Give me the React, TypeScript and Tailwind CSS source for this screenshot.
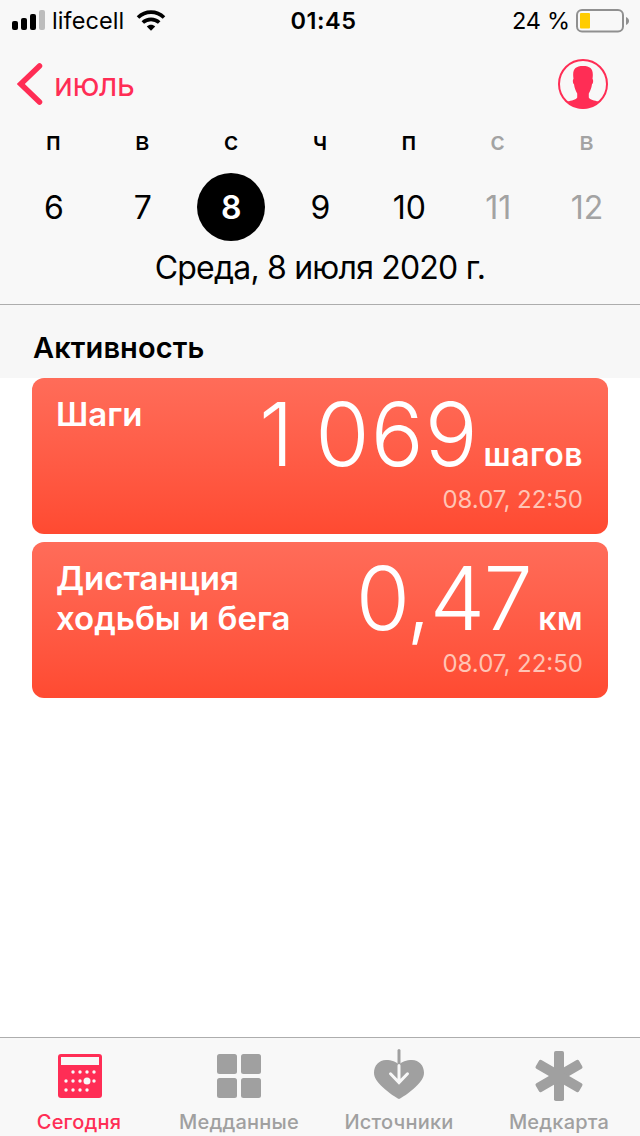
const days = [
  { letter: 'п', date: 6 },
  { letter: 'в', date: 7 },
  { letter: 'с', date: 8, selected: true },
  { letter: 'ч', date: 9 },
  { letter: 'п', date: 10 },
  { letter: 'с', date: 11, disabled: true },
  { letter: 'в', date: 12, disabled: true },
];

const cards = [
  { title: 'Шаги', value: '1 069', unit: 'шагов', time: '08.07, 22:50', valueClass: 'tracking-[1px] [word-spacing:-5px] mr-[5px]' },
  { title: 'Дистанция ходьбы и бега', value: '0,47', unit: 'км', time: '08.07, 22:50', valueClass: 'tracking-[-1.5px] mr-[7px]' },
];

const TodayIcon = () => (
  <svg width="54" height="54" viewBox="-1 0 54 54" fill="currentColor">
    <rect x="5" y="6" width="44" height="44" rx="3" />
    <rect x="8" y="9" width="38" height="8" fill="#f8f8f8" />
    <g fill="#f8f8f8">
      <circle cx="20" cy="24" r="1.7" />
      <circle cx="27" cy="24" r="1.7" />
      <circle cx="34" cy="24" r="1.7" />
      <circle cx="41" cy="24" r="1.7" />
      <circle cx="13" cy="33" r="1.7" />
      <circle cx="20" cy="33" r="1.7" />
      <circle cx="27" cy="33" r="1.7" />
      <circle cx="34" cy="33" r="3.5" />
      <circle cx="41" cy="33" r="1.7" />
      <circle cx="13" cy="42" r="1.7" />
      <circle cx="20" cy="42" r="1.7" />
      <circle cx="27" cy="42" r="1.7" />
      <circle cx="34" cy="42" r="1.7" />
    </g>
  </svg>
);

const DataIcon = () => (
  <svg width="54" height="54" viewBox="0 0 54 54" fill="currentColor">
    <rect x="5" y="6" width="20" height="20" rx="2.5" />
    <rect x="29" y="6" width="20" height="20" rx="2.5" />
    <rect x="5" y="30" width="20" height="20" rx="2.5" />
    <rect x="29" y="30" width="20" height="20" rx="2.5" />
  </svg>
);

const SourcesIcon = () => (
  <svg width="54" height="54" viewBox="0 0 54 54" fill="currentColor">
    <path d="M27 51C24.500 50 17 45 10.500 39C5.500 34.500 2 30 2 24.800C2 17.500 7 12 14 12C19.500 12 24.500 13.500 27 17C29.500 13.500 34.500 12 40 12C47 12 52 17.500 52 24.800C52 30 48.500 34.500 43.500 39C37 45 29.500 50 27 51Z" />
    <path d="M27 2.500V17" stroke="currentColor" strokeWidth="3" strokeLinecap="round" />
    <path d="M27 17.500V34M18.500 25.800L27 34.500L35.500 25.800" fill="none" stroke="#f8f8f8" strokeWidth="3" strokeLinecap="round" />
  </svg>
);

const MedicalIcon = () => (
  <svg width="54" height="54" viewBox="0 0 54 54" fill="currentColor">
    <rect x="22" y="3" width="10" height="50" rx="1.800" />
    <rect x="22" y="3" width="10" height="50" rx="1.800" transform="rotate(60 27 28)" />
    <rect x="22" y="3" width="10" height="50" rx="1.800" transform="rotate(-60 27 28)" />
  </svg>
);

const tabs = [
  { label: 'Сегодня', icon: TodayIcon, active: true },
  { label: 'Медданные', icon: DataIcon },
  { label: 'Источники', icon: SourcesIcon },
  { label: 'Медкарта', icon: MedicalIcon },
];

const StatusBar = () => (
  <div className="grid h-10 grid-cols-[1fr_auto_1fr] items-center pt-px pr-[10px] pl-3 text-[23.5px]">
    <div className="flex items-center">
      <svg className="-mt-px" width="33" height="20" viewBox="0 0 33 20">
        <rect x="0" y="11" width="6" height="9" rx="2" />
        <rect x="9" y="8" width="6" height="12" rx="2" />
        <rect x="18" y="4" width="6" height="16" rx="2" />
        <rect x="27" y="0" width="6" height="20" rx="2" fill="#bdbdbd" />
      </svg>
      <span className="mt-px ml-[7px] tracking-[0.1px]">lifecell</span>
      <svg className="ml-3" width="30" height="21" viewBox="0 0 30 21" fill="none" stroke="#000" strokeWidth="3.700">
        <path d="M2 7.500C9.500 0.400 20.500 0.400 28 7.500" />
        <path d="M6.800 12.500C11.500 8.200 18.500 8.200 23.200 12.500" />
        <path d="M10.800 16.500C13.200 14.200 16.800 14.200 19.200 16.500L15 20.700Z" fill="#000" stroke="none" />
      </svg>
    </div>
    <div className="mt-px pl-[5px] font-semibold tracking-[0.5px]">01:45</div>
    <div className="flex items-center justify-end">
      <span className="mt-px tracking-[-0.2px]">24 %</span>
      <svg className="ml-[6px]" width="54" height="24" viewBox="0 0 54 24">
        <rect x="1" y="1" width="46" height="21.500" rx="5" fill="none" stroke="#909090" strokeWidth="2" />
        <rect x="4" y="4" width="10" height="15.500" rx="1" fill="#fc0" />
        <path d="M50 8C54 9.500 54 14.500 50 16Z" fill="#909090" />
      </svg>
    </div>
  </div>
);

const NavBar = () => (
  <div className="flex h-[88px] items-center justify-between pr-8 pl-[17px] text-[#ff2d55]">
    <div className="flex items-center">
      <svg width="26" height="42" viewBox="0 0 26 42" fill="none" stroke="currentColor" strokeWidth="5.500" strokeLinecap="round">
        <path d="M22.500 3L3.800 21L22.500 39" />
      </svg>
      <span className="mt-px ml-[11px] text-[32px] tracking-[-0.4px]">июль</span>
    </div>
    <svg width="50" height="50" viewBox="0 0 50 50">
      <circle cx="25" cy="25" r="24" fill="none" stroke="currentColor" strokeWidth="2" />
      <path
        d="M15.400 19C14.300 10.500 17 7 25 7C33 7 35.700 10.500 34.600 19L34.500 20C35.500 20.500 35.300 24.300 34 25.300C33.500 29 32.300 32 30.800 34.500V38.500C31.800 41 36.500 41.500 40.500 42.500C31 52 19 52 9.500 42.500C13.500 41.500 18.200 41 19.200 38.500V34.500C17.700 32 16.500 29 16 25.300C14.700 24.300 14.500 20.500 15.500 20Z"
        fill="currentColor"
      />
    </svg>
  </div>
);

const WeekStrip = () => (
  <div className="grid grid-cols-7 px-[9px]">
    {days.map((day) => (
      <div key={day.date} className={day.disabled ? 'flex flex-col items-center text-[#a3a3a3]' : 'flex flex-col items-center'}>
        <span className="-mt-[2px] h-[30px] text-[25.5px] leading-[30px] font-medium">{day.letter}</span>
        <span
          className={
            day.selected
              ? 'mt-[17px] flex size-[68px] items-center justify-center rounded-full bg-black pt-px text-[32px] font-semibold text-white'
              : 'mt-[17px] flex size-[68px] items-center justify-center pt-[2px] pl-px text-[32px]'
          }
        >
          {day.date}
        </span>
      </div>
    ))}
  </div>
);

export default function App() {
  return (
    <div className="flex h-[1136px] w-[640px] flex-col overflow-hidden bg-white font-['Inter',sans-serif] whitespace-nowrap text-black">
      <header className="h-[305px] shrink-0 border-b border-[#adadad] bg-[#f8f8f8]">
        <StatusBar />
        <NavBar />
        <WeekStrip />
        <div className="mt-[7px] text-center text-[32px] leading-[40px] tracking-[-0.8px]">Среда, 8 июля 2020 г.</div>
      </header>

      <main className="flex-1">
        <h2 className="h-[73px] bg-[#f7f7f7] pt-[22px] pl-[33px] text-[29px] leading-[42px] font-semibold tracking-[0.1px]">Активность</h2>
        <div className="flex flex-col gap-2 px-8">
          {cards.map((card) => (
            <section key={card.title} className="flex h-[156px] justify-between rounded-xl bg-linear-to-b from-[#ff6c59] to-[#ff4a31] pr-[25px] pl-6 text-white">
              <h3 className="w-[250px] pt-4 text-[33px] leading-[40px] font-semibold whitespace-normal">{card.title}</h3>
              <div className="flex flex-col items-end">
                <div className="flex items-baseline">
                  <span className={`text-[88px] leading-[112px] font-light ${card.valueClass}`}>{card.value}</span>
                  <span className="text-[32px] font-semibold tracking-[0.5px]">{card.unit}</span>
                </div>
                <div className="-mt-[5px] text-[24px] leading-[30px] text-[#ffc4b5]">{card.time}</div>
              </div>
            </section>
          ))}
        </div>
      </main>

      <nav className="grid h-[99px] shrink-0 grid-cols-4 border-t border-[#adadad] bg-[#f8f8f8]">
        {tabs.map((tab) => {
          const Icon = tab.icon;
          return (
            <div key={tab.label} className={`flex flex-col items-center pt-[10px] pr-[2px] ${tab.active ? 'text-[#ff2d55]' : 'text-[#a0a0a0]'}`}>
              <Icon />
              <span className="mt-[8px] text-[20px] leading-[24px] font-medium tracking-[0.2px]">{tab.label}</span>
            </div>
          );
        })}
      </nav>
    </div>
  );
}
